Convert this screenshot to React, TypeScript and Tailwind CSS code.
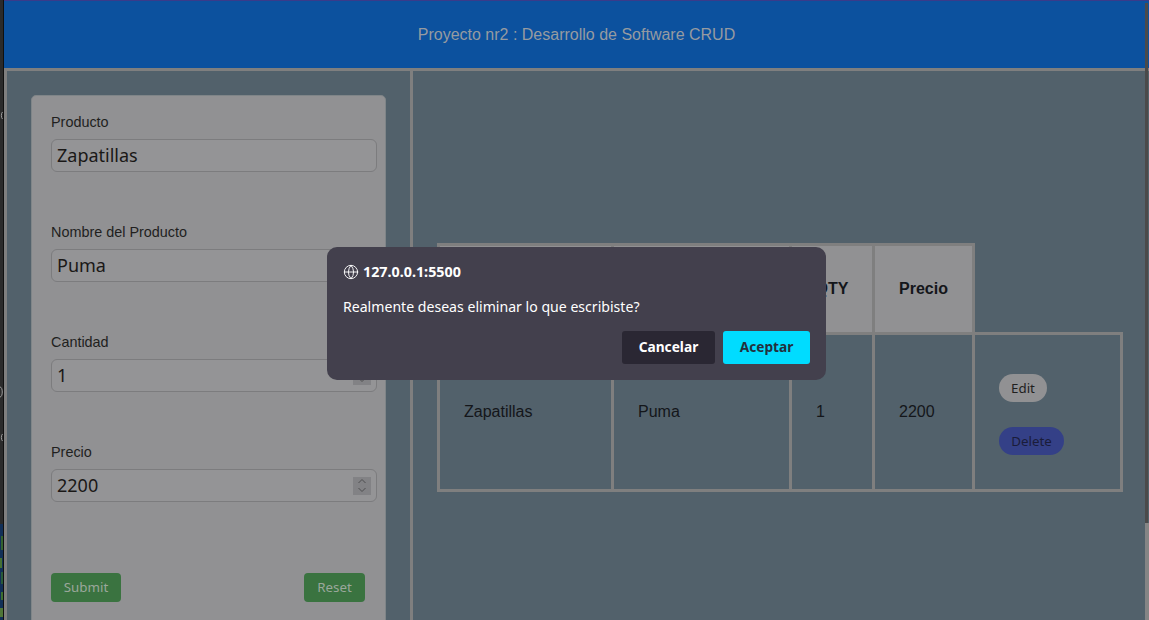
import { Globe } from "lucide-react";

const ubuntu = "font-['Noto_Sans',sans-serif]";
const arial = "font-['Liberation_Sans',Arial,sans-serif]";

const Spinner = () => (
  <div className="flex h-[18px] w-[18px] flex-col items-center justify-center gap-[3px] bg-[#828285]">
    <svg width="10" height="6" viewBox="0 0 10 6" fill="none" stroke="#4e4e50" strokeWidth="1">
      <path d="M1.5 5 5 1.5 8.5 5" />
    </svg>
    <svg width="10" height="6" viewBox="0 0 10 6" fill="none" stroke="#4e4e50" strokeWidth="1">
      <path d="M1.5 1 5 4.5 8.5 1" />
    </svg>
  </div>
);

const Field = ({ label, value, number }: { label: string; value: string; number?: boolean }) => (
  <div className="h-[110px]">
    <label className={`block h-[28px] pt-[1px] text-[14.4px] leading-[20px] text-[#211f1e] ${arial}`}>{label}</label>
    <div className="flex h-[33px] w-[326px] items-center justify-between rounded-[6px] border border-[#7c7c7e] bg-[#949496] pl-[5px] pr-[5px]">
      <span className={`pb-[2px] text-[18px] leading-[24px] text-[#1a1817] ${ubuntu}`}>{value}</span>
      {number && <Spinner />}
    </div>
  </div>
);

const Sidebar = () => (
  <aside className="h-full w-[409px] shrink-0 border-r-[3px] border-l-[3px] border-[#7f7f7f] bg-[#52616b] pl-[24px] pt-[24px]">
    <div className="h-[540px] w-[355px] rounded-t-[5px] border border-[#7f8588] bg-[#919193] pl-[19px] pt-[15px]">
      <Field label="Producto" value="Zapatillas" />
      <Field label="Nombre del Producto" value="Puma" />
      <Field label="Cantidad" value="1" number />
      <Field label="Precio" value="2200" number />
      <div className={`mt-[22px] flex w-[314px] justify-between text-[13.33px] text-[#9aa79b] ${ubuntu}`}>
        <button className="h-[29px] w-[70px] rounded-[4px] bg-[#3a7340] pt-[1px]">Submit</button>
        <button className="h-[29px] w-[61px] rounded-[4px] bg-[#3a7340] pt-[1px]">Reset</button>
      </div>
    </div>
  </aside>
);

const headCell = "border-[3px] border-[#7f7f7f] bg-[#919193] text-center font-bold";
const bodyCell = "border-[3px] border-[#7f7f7f] pl-[24px] text-left font-normal";

const Products = () => (
  <section className="flex-1 pl-[24px] pt-[172px]">
    <table className={`w-[683px] table-fixed border-collapse text-[16px] text-[#14161a] ${arial}`}>
      <colgroup>
        <col className="w-[174px]" />
        <col className="w-[178px]" />
        <col className="w-[83px]" />
        <col className="w-[100px]" />
        <col className="w-[148px]" />
      </colgroup>
      <thead>
        <tr className="h-[89px]">
          <th className={headCell}>Producto</th>
          <th className={headCell}>Nombre</th>
          <th className={headCell}>QTY</th>
          <th className={headCell}>Precio</th>
        </tr>
      </thead>
      <tbody>
        <tr className="h-[157px]">
          <td className={bodyCell}>Zapatillas</td>
          <td className={bodyCell}>Puma</td>
          <td className={bodyCell}>1</td>
          <td className={bodyCell}>2200</td>
          <td className={bodyCell}>
            <div className={`flex flex-col items-start gap-[25px] pt-[4px] text-[13.33px] leading-[28px] text-[#211f1e] ${ubuntu}`}>
              <button className="h-[28px] w-[48px] rounded-full bg-[#919193]">Edit</button>
              <button className="h-[28px] w-[65px] rounded-full bg-[#344087] text-[#1a1c3a]">Delete</button>
            </div>
          </td>
        </tr>
      </tbody>
    </table>
  </section>
);

const Dialog = () => (
  <div className={`absolute left-[327px] top-[247px] h-[133px] w-[499px] rounded-[10px] bg-[#43404d] px-[16px] pt-[15px] text-white ${ubuntu}`}>
    <div className="flex h-[20px] items-center gap-[4px] text-[14.3px] font-bold">
      <Globe className="size-[16px]" strokeWidth={1.4} />
      127.0.0.1:5500
    </div>
    <p className="mt-[15px] text-[14.1px] leading-[20px]">Realmente deseas eliminar lo que escribiste?</p>
    <div className="mt-[14px] flex justify-end gap-[8px] text-[13.7px] font-bold">
      <button className="h-[33px] w-[93px] rounded-[3px] bg-[#2a2733]">Cancelar</button>
      <button className="h-[33px] w-[87px] rounded-[3px] bg-[#00dcff] text-[#23303d]">Aceptar</button>
    </div>
  </div>
);

// the bit of desktop that shows to the left of the browser window
const DesktopEdge = () => (
  <div className="relative w-[4px] shrink-0 overflow-hidden border-r border-[#101010] bg-[#2b2b2b]">
    <svg className="absolute left-0 top-[110px]" width="3" height="340" viewBox="0 0 3 340" fill="none" stroke="#9a9a9a">
      <path d="M2.5 2C1 3 1 8 2.5 9" />
      <path d="M0 277C3 277 3 287 0 287" />
      <path d="M2.5 324C1 325 1 330 2.5 331" />
    </svg>
    <svg className="absolute left-0 top-[524px]" width="3" height="96" viewBox="0 0 3 96">
      <rect width="3" height="96" fill="#123058" />
      <rect x="1" y="12" width="2" height="14" fill="#33622f" />
      <rect x="0" y="34" width="2" height="10" fill="#457034" />
      <rect x="1" y="48" width="2" height="12" fill="#285a3a" />
      <rect x="1" y="68" width="2" height="8" fill="#3c6e30" />
      <rect x="0" y="84" width="3" height="9" fill="#4f7638" />
    </svg>
  </div>
);

export default function App() {
  return (
    <div className="relative flex h-[620px] w-[1149px] overflow-hidden bg-[#2b2b2b]">
      <DesktopEdge />
      <main className="flex w-[1145px] flex-col border-t border-[#3a3b8a]">
        <header className={`flex h-[67px] shrink-0 items-center justify-center bg-[#0c519e] text-[16px] text-[#969ba1] ${arial}`}>
          Proyecto nr2 : Desarrollo de Software CRUD
        </header>
        <div className="flex min-h-0 flex-1 border-t-[3px] border-[#7f7f7f] bg-[#52616b]">
          <Sidebar />
          <Products />
        </div>
      </main>
      {/* scrollbar sits over the page */}
      <div className="absolute left-[1145px] top-[3px] h-[520px] w-[3px] bg-[#4a4a4a]" />
      <div className="absolute left-[1145px] top-[523px] h-[97px] w-[4px] bg-[#858585]" />
      <Dialog />
    </div>
  );
}
